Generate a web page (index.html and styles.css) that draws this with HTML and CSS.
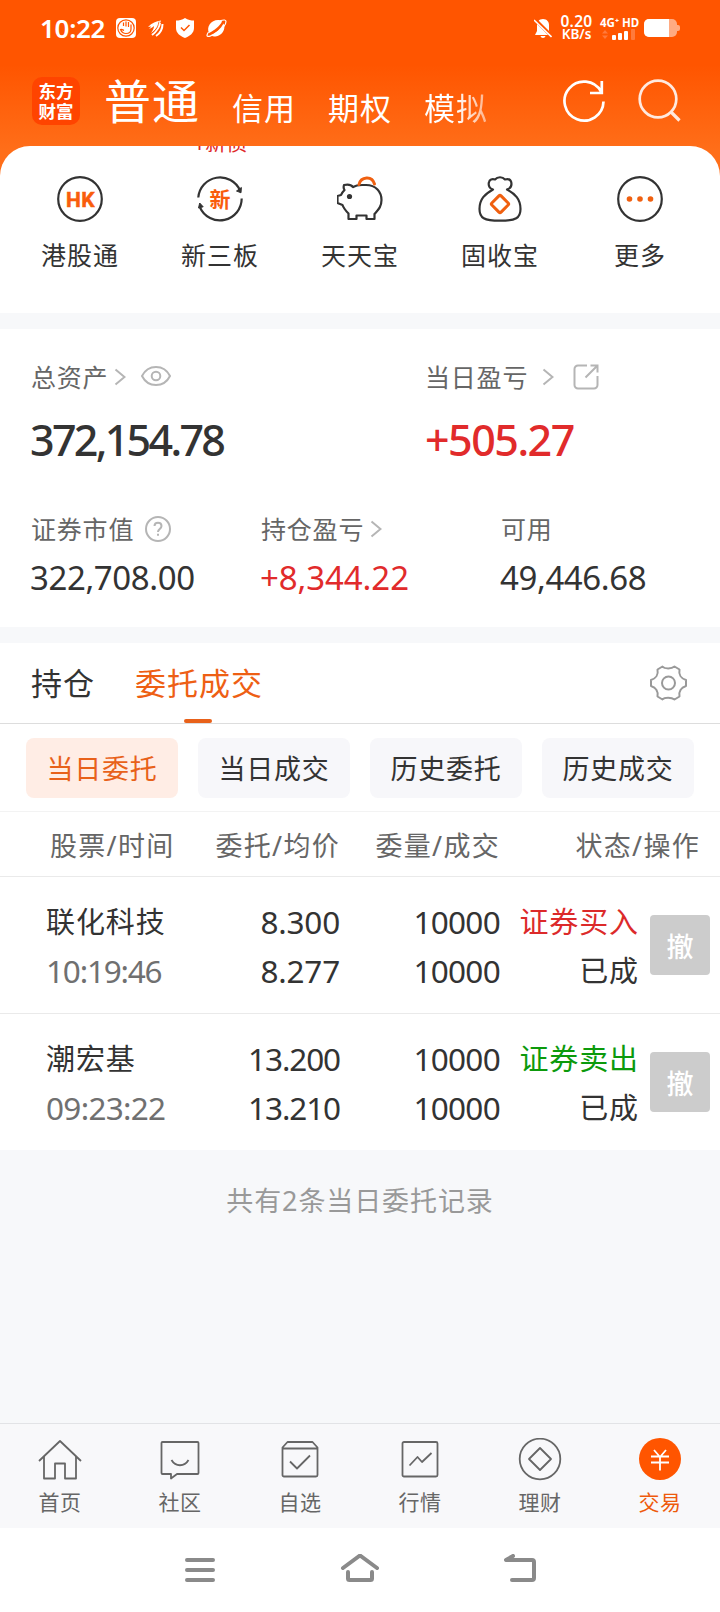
FILE: index.html
```html
<!DOCTYPE html>
<html lang="zh-CN">
<head>
    <meta charset="UTF-8">
    <meta name="viewport" content="width=device-width, initial-scale=1.0">
    <title>东方财富 - 交易</title>
    <link rel="stylesheet" href="styles.css">
</head>
<body>

    <div class="header">
        <!-- Status bar -->
        <div class="status-bar">
            <span class="clock">10:22</span>
            <svg class="status-icon" width="20" height="20" viewBox="0 0 20 20">
                <rect width="20" height="20" rx="4" fill="#fff"/>
                <circle cx="10" cy="10" r="8.2" fill="none" stroke="#ff5500" stroke-width="1.2"/>
                <path d="M7.500 4.500V8M10 3.500V8.500M12.500 4V9M15 6.500V11c0 3-2 4.500-5 4.500S5.500 14 4.500 11.500c1.500-.5 2.500.5 3.500 1" fill="none" stroke="#ff5500" stroke-width="1.200"/>
            </svg>
            <svg class="status-icon" width="16" height="17" viewBox="0 0 16 17">
                <path d="M0 7C4 3 8 1 13 0.500c-1 4-4 8.500-10 12.500 2-3 3-5 3-7-1 1-2.500 2-5 3 1-1 2-2 2-2.500z" fill="#fff"/>
                <path d="M8 16c4-2.500 6.500-6 6.500-12" fill="none" stroke="#fff" stroke-width="2"/>
                <path d="M4 15C9 11 11.500 7 12 3" fill="none" stroke="#fff" stroke-width="2"/>
                <path d="M4 13C8 10 10.500 6 11 1.500" fill="none" stroke="#ff5500" stroke-width="0.800"/>
            </svg>
            <svg class="status-icon" width="18" height="20" viewBox="0 0 18 20">
                <path d="M9 0c3 2 6 2.500 9 2.500V10c0 5-4 8-9 10C4 18 0 15 0 10V2.500C3 2.500 6 2 9 0z" fill="#fff"/>
                <path d="M5 9.500l3 3L13.500 7" fill="none" stroke="#ff5500" stroke-width="1.500"/>
            </svg>
            <svg class="status-icon" width="21" height="19" viewBox="0 0 21 19">
                <path d="M3 14C0 8 5 1 12 1c2 0 3 .5 4 1.500C14 7 8 11.500 3 14z" fill="#fff"/>
                <path d="M17.500 4.500c3 6-2 12.500-8 13-2 0-3.500-.5-4.500-1.500C10 14 15 9.500 17.500 4.500z" fill="#fff"/>
                <path d="M14 1.800c4-1.300 6-1 6 .7 0 3-4 7.500-9 11S1 18.500 1 16.500c0-1 .5-2 1.500-3.500" fill="none" stroke="#fff" stroke-width="1.200"/>
            </svg>
            <svg class="bell" width="18" height="21" viewBox="0 0 18 21">
                <path d="M9 1c4 0 6 3 6 6v6l2 4H1l2-4V7c0-3 2-6 6-6zM6.500 18h5c-.5 2.500-4.500 2.500-5 0z" fill="#fff"/>
                <path d="M1 1.500L18 18.500" stroke="#ff5500" stroke-width="3.500"/>
                <path d="M0 2L17.500 19" stroke="#fff" stroke-width="1.600"/>
            </svg>
            <div class="speed">
                <span>0.20</span>
                <span>KB/s</span>
            </div>
            <div class="signal">
                <span>4G⁺ HD</span>
                <svg width="34" height="11" viewBox="0 0 34 11">
                    <path d="M0 4.500L3 1l3 3.500zM0 6.500L3 10l3-3.500z" fill="#ff7a3c"/>
                    <rect x="10" y="6" width="4" height="5" rx="1" fill="#fff"/>
                    <rect x="16" y="4" width="4" height="7" rx="1" fill="#fff"/>
                    <rect x="22" y="2" width="4" height="9" rx="1" fill="#fff"/>
                    <rect x="29" y="0" width="4" height="11" rx="1" fill="#ff7a3c"/>
                </svg>
            </div>
            <div class="battery"><div class="battery-level"></div></div>
        </div>

        <!-- Account tabs -->
        <div class="account-bar">
            <div class="logo"><span>东方</span><span>财富</span></div>
            <span class="account active">普通</span>
            <span class="account">信用</span>
            <span class="account">期权</span>
            <span class="account fade">模拟</span>
            <svg class="refresh" width="44" height="44" viewBox="0 0 44 44">
                <path d="M41.500 22.500A19.500 19.500 0 1 1 39 12.500M39.800 2v12H28" fill="none" stroke="#fff" stroke-width="2.700"/>
            </svg>
            <svg class="search" width="44" height="44" viewBox="0 0 44 44">
                <circle cx="20" cy="20" r="18.300" fill="none" stroke="#ffe9df" stroke-width="2.700"/>
                <path d="M33 33l8.500 8.500" stroke="#ffe9df" stroke-width="3.200"/>
            </svg>
        </div>
    </div>

    <!-- Shortcuts -->
    <div class="shortcuts">
        <span class="bond-tip">1新债</span>
        <div class="shortcut">
            <svg width="46" height="46" viewBox="0 0 46 46">
                <circle cx="23" cy="23" r="21.800" fill="none" stroke="#333" stroke-width="2.200"/>
                <text x="23.500" y="30.500" text-anchor="middle" class="hk">HK</text>
            </svg>
            <span>港股通</span>
        </div>
        <div class="shortcut">
            <svg width="46" height="46" viewBox="0 0 46 46">
                <path d="M1.300 21.500A21.800 21.800 0 0 1 43 14.500M44.700 22.500A21.800 21.800 0 0 1 3 31.500" fill="none" stroke="#333" stroke-width="2.200"/>
                <path d="M39.500 15l4.500 1.800.4-5.300zM1.500 32l1.200-5 3.500 3.800z" fill="#333" stroke="#333" stroke-width="1" stroke-linejoin="round"/>
                <text x="23" y="31" text-anchor="middle" class="xin">新</text>
            </svg>
            <span>新三板</span>
        </div>
        <div class="shortcut">
            <svg width="46" height="46" viewBox="0 0 46 46">
                <path d="M7 9c4-1 7-.5 9 2 2.500-1.500 5-2 9-2h4c10 0 15.500 7 15.500 15 0 7-3.500 10-7 14v5h-8v-3.500h-10V43h-8v-5.500C9 35 6.500 32 5.500 29L.5 27v-7l3.500-1c1-2 2-3.500 3.500-5C6.500 12.500 6.500 10.500 7 9z" fill="none" stroke="#333" stroke-width="2.200" stroke-linejoin="round"/>
                <circle cx="12.500" cy="20.500" r="2.600" fill="#333"/>
                <path d="M22 8.500c2-8 13-9 15.500-.5" fill="none" stroke="#f06010" stroke-width="3" stroke-linecap="round"/>
            </svg>
            <span>天天宝</span>
        </div>
        <div class="shortcut">
            <svg width="46" height="46" viewBox="0 0 46 46">
                <path d="M16 13.500c-3.500-1-5-4-4-7.500.6-2.500 3-3.300 6-2.500 2.500-3 7.500-3 10 0 3-.8 5.500 0 6.200 2.500.8 3.500-.7 6.500-4.200 7.500 8 4.500 13.500 9.500 13.500 19.500 0 9-4.500 11.700-20.500 11.700S2.500 42 2.500 33c0-10 5.500-15 13.500-19.500z" fill="none" stroke="#333" stroke-width="2.200" stroke-linejoin="round"/>
                <rect x="16.500" y="21.500" width="13" height="13" rx="1.500" transform="rotate(45 23 28)" fill="none" stroke="#f06010" stroke-width="3"/>
            </svg>
            <span>固收宝</span>
        </div>
        <div class="shortcut">
            <svg width="46" height="46" viewBox="0 0 46 46">
                <circle cx="23" cy="23" r="21.800" fill="none" stroke="#333" stroke-width="2.200"/>
                <g fill="#f06010">
                    <circle cx="12.500" cy="23" r="2.800"/>
                    <circle cx="23" cy="23" r="2.800"/>
                    <circle cx="33.500" cy="23" r="2.800"/>
                </g>
            </svg>
            <span>更多</span>
        </div>
    </div>

    <!-- Assets -->
    <div class="assets">
        <div class="asset-row">
            <div class="asset total">
                <div class="asset-label">总资产
                    <svg class="arrow" width="12" height="18" viewBox="0 0 12 18"><path d="M1.500 1.500L10.500 9l-9 7.500"/></svg>
                    <svg class="eye" width="30" height="20" viewBox="0 0 30 20">
                        <path d="M1 10C7-2 23-2 29 10 23 22 7 22 1 10z"/>
                        <circle cx="15" cy="10" r="4.300"/>
                    </svg>
                </div>
                <div class="asset-value big">372,154.78</div>
            </div>
            <div class="asset today">
                <div class="asset-label">当日盈亏
                    <svg class="arrow far" width="12" height="18" viewBox="0 0 12 18"><path d="M1.500 1.500L10.500 9l-9 7.500"/></svg>
                    <svg class="share" width="26" height="26" viewBox="0 0 26 26">
                        <path d="M14 1.500H5A3.500 3.500 0 0 0 1.500 5v16A3.500 3.500 0 0 0 5 24.500h16a3.500 3.500 0 0 0 3.500-3.500v-9M12.500 13.500L24 2M17.500 1.500h7v7"/>
                    </svg>
                </div>
                <div class="asset-value big up gain">+505.27</div>
            </div>
        </div>
        <div class="asset-row second">
            <div class="asset market">
                <div class="asset-label">证券市值
                    <svg class="help" width="26" height="26" viewBox="0 0 26 26">
                        <circle cx="13" cy="13" r="12"/>
                        <path d="M9.500 10c0-4.500 7-4.500 7 0 0 3-3.500 3-3.500 6M13 17.800v2"/>
                    </svg>
                </div>
                <div class="asset-value">322,708.00</div>
            </div>
            <div class="asset position">
                <div class="asset-label">持仓盈亏
                    <svg class="arrow" width="12" height="18" viewBox="0 0 12 18"><path d="M1.500 1.500L10.500 9l-9 7.500"/></svg>
                </div>
                <div class="asset-value up">+8,344.22</div>
            </div>
            <div class="asset">
                <div class="asset-label">可用</div>
                <div class="asset-value">49,446.68</div>
            </div>
        </div>
    </div>

    <!-- Orders -->
    <div class="orders">
        <div class="tabs">
            <span class="tab">持仓</span>
            <span class="tab active">委托成交</span>
            <svg class="gear" width="37" height="36" viewBox="0 0 37 36">
                <path d="M12.500 1.500c2 2.500 9 2.500 12 0l5 3c-1 5 1.500 9 6.500 10.500v6c-5 1.500-7.500 5.500-6.500 10.500l-5 3c-3-2.500-10-2.500-12 0l-5-3c1-5-1.500-9-6.500-10.500v-6c5-1.500 7.500-5.500 6.500-10.500z"/>
                <circle cx="18.500" cy="18" r="6.500"/>
            </svg>
        </div>
        <div class="filters">
            <div class="filter active">当日委托</div>
            <div class="filter">当日成交</div>
            <div class="filter">历史委托</div>
            <div class="filter">历史成交</div>
        </div>
        <div class="table-head">
            <span class="col-name">股票/时间</span>
            <span class="col-price">委托/均价</span>
            <span class="col-amount">委量/成交</span>
            <span class="col-state">状态/操作</span>
        </div>
        <div class="order">
            <div class="col-name"><p>联化科技</p><p class="time">10:19:46</p></div>
            <div class="col-price"><p>8.300</p><p>8.277</p></div>
            <div class="col-amount"><p>10000</p><p>10000</p></div>
            <div class="col-state"><p class="buy">证券买入</p><p>已成</p></div>
            <div class="cancel">撤</div>
        </div>
        <div class="order">
            <div class="col-name"><p>潮宏基</p><p class="time late">09:23:22</p></div>
            <div class="col-price narrow"><p>13.200</p><p>13.210</p></div>
            <div class="col-amount"><p>10000</p><p>10000</p></div>
            <div class="col-state"><p class="sell">证券卖出</p><p>已成</p></div>
            <div class="cancel">撤</div>
        </div>
    </div>
    <div class="summary">共有2条当日委托记录</div>

    <!-- Bottom tab bar -->
    <div class="tab-bar">
        <div class="tab-item">
            <svg width="44" height="44" viewBox="0 0 44 44">
                <path d="M1 23L22 3l21 20M6 18.500V40.500h11V25.500h10v15h11V18.500"/>
            </svg>
            <span>首页</span>
        </div>
        <div class="tab-item">
            <svg width="44" height="44" viewBox="0 0 44 44">
                <path d="M4.500 4h35a1 1 0 0 1 1 1v30a1 1 0 0 1-1 1H19l-6 4.500V36H4.500a1 1 0 0 1-1-1V5a1 1 0 0 1 1-1zM13.500 22c4 7 13 7 17 0"/>
            </svg>
            <span>社区</span>
        </div>
        <div class="tab-item">
            <svg width="44" height="44" viewBox="0 0 44 44">
                <path d="M4.500 9.500L9.500 4h25l5 5.500V37a1.500 1.500 0 0 1-1.500 1.500H6A1.500 1.500 0 0 1 4.500 37zM4.500 10.500h35M12 23.500l7 7L32 17.500"/>
            </svg>
            <span>自选</span>
        </div>
        <div class="tab-item">
            <svg width="44" height="44" viewBox="0 0 44 44">
                <rect x="4.500" y="4" width="35" height="34.500" rx="1.500"/>
                <path d="M11.500 27.500l8-8.500 4.500 5 9.500-9"/>
            </svg>
            <span>行情</span>
        </div>
        <div class="tab-item">
            <svg width="44" height="44" viewBox="0 0 44 44">
                <circle cx="22" cy="21" r="20.300"/>
                <path d="M22 10l11 11-11 11-11-11z"/>
            </svg>
            <span>理财</span>
        </div>
        <div class="tab-item active">
            <svg width="44" height="44" viewBox="0 0 44 44">
                <circle class="coin" cx="22" cy="21" r="21"/>
                <path class="yen" d="M16 12l6 7 6-7M13 18.500h18M13 24.500h18M22 19v13.500"/>
            </svg>
            <span>交易</span>
        </div>
    </div>

    <!-- System navigation -->
    <div class="nav-bar">
        <svg width="40" height="32" viewBox="0 0 40 32">
            <path d="M7 6h26M7 16h26M7 26h26"/>
        </svg>
        <svg width="40" height="32" viewBox="0 0 40 32">
            <path d="M3 14L20 1.500 37 14M8 18v6.500a1.500 1.500 0 0 0 1.500 1.500h21a1.500 1.500 0 0 0 1.500-1.500V18"/>
        </svg>
        <svg width="40" height="32" viewBox="0 0 40 32">
            <path d="M13 2L6 6h26a2 2 0 0 1 2 2v16a2 2 0 0 1-2 2H12"/>
        </svg>
    </div>

</body>
</html>
```
FILE: styles.css
```css
body {
    margin: 0;
    width: 720px;
    height: 1612px;
    display: flex;
    flex-direction: column;
    font-family: "Noto Sans", "Noto Sans CJK SC", sans-serif;
    background-color: #f7f8fa;
    color: #333;
    overflow: hidden;
}

p {
    margin: 0;
}

svg {
    flex-shrink: 0;
}

/* Header */
.header {
    height: 176px;
    background: linear-gradient(#ff5500 65px, #ff6e19 150px);
    color: white;
}

.status-bar {
    display: flex;
    align-items: center;
    height: 56px;
    padding: 0 40px;
}

.clock {
    font-size: 26px;
    font-weight: 600;
    letter-spacing: -0.3px;
    width: 76px;
    line-height: 56px;
}

.status-icon {
    margin-right: 12px;
}

.bell {
    margin-left: auto;
    margin-right: 8px;
}

.speed {
    display: flex;
    flex-direction: column;
    align-items: center;
    width: 33px;
    font-size: 13.500px;
    font-weight: 600;
    line-height: 13px;
    margin-right: 7px;
    white-space: nowrap;
}

.speed span:first-child {
    font-size: 15.500px;
    letter-spacing: 0.3px;
}

.signal {
    width: 39px;
    font-size: 11.500px;
    font-weight: 700;
    line-height: 13px;
    margin-right: 5px;
    white-space: nowrap;
}

.signal svg {
    display: block;
    margin-left: 2px;
}

.battery {
    position: relative;
    width: 33px;
    height: 18px;
    border-radius: 5px;
    background-color: #ffab82;
    margin-right: 3px;
}

.battery::after {
    content: "";
    position: absolute;
    right: -3px;
    top: 6px;
    width: 3px;
    height: 6px;
    border-radius: 0 2px 2px 0;
    background-color: #ffab82;
}

.battery-level {
    width: 25px;
    height: 18px;
    border-radius: 5px 0 0 5px;
    background-color: white;
}

.account-bar {
    display: flex;
    align-items: flex-end;
    height: 74px;
    padding-left: 32px;
}

.logo {
    display: flex;
    flex-direction: column;
    justify-content: center;
    align-items: center;
    width: 48px;
    height: 48px;
    margin: 0 24px 5px 0;
    border-radius: 10px;
    background-color: #ff4400;
    font-size: 17.500px;
    font-weight: 700;
    line-height: 20px;
}

.account {
    font-size: 31px;
    letter-spacing: 1px;
    line-height: 40px;
    margin: 0 32px 2px 0;
}

.account.active {
    font-size: 47px;
    letter-spacing: 1px;
    line-height: 58px;
    margin: 0 32px 0 0;
}

.account.fade {
    margin-right: 0;
    background: linear-gradient(to right, #fff 50%, rgba(255, 255, 255, 0.5));
    -webkit-background-clip: text;
    background-clip: text;
    color: transparent;
}

.refresh {
    margin: 0 32px 7px auto;
}

.search {
    margin: 0 38px 7px 0;
}

/* Shortcuts */
.shortcuts {
    position: relative;
    display: flex;
    height: 137px;
    margin-top: -30px;
    padding: 30px 10px 0;
    border-radius: 30px 30px 0 0;
    background-color: white;
    overflow: hidden;
}

.shortcut {
    display: flex;
    flex-direction: column;
    align-items: center;
    width: 140px;
    font-size: 25px;
    letter-spacing: 1px;
    line-height: 36px;
}

.shortcut span {
    margin-top: 15px;
}

.bond-tip {
    position: absolute;
    left: 193px;
    top: -18px;
    font-size: 21px;
    line-height: 28px;
    color: #e02a2a;
}

.hk {
    font-family: Roboto, sans-serif;
    font-size: 21px;
    font-weight: 700;
    letter-spacing: 0.5px;
    fill: #f95d0c;
    stroke: #f95d0c;
    stroke-width: 0.5px;
}

.xin {
    font-size: 21px;
    font-weight: 700;
    letter-spacing: 0;
    fill: #f95d0c;
}

/* Assets */
.assets {
    height: 268px;
    margin-top: 16px;
    padding: 30px 0 0 30px;
    box-sizing: border-box;
    height: 298px;
    background-color: white;
}

.asset-row {
    display: flex;
}

.asset-row.second {
    margin-top: 39px;
}

.asset.total {
    width: 395px;
}

.asset.market {
    width: 230px;
}

.asset.position {
    width: 240px;
}

.asset-label {
    display: flex;
    align-items: center;
    height: 36px;
    padding-left: 1px;
    font-size: 25px;
    letter-spacing: 0.8px;
    line-height: 36px;
    color: #666;
}

.today .asset-label {
    padding-left: 0;
}

.asset-label svg {
    fill: none;
    stroke: #b5b5b5;
    stroke-width: 2;
}

.arrow {
    margin-left: 6px;
}

.arrow.far {
    margin-left: 14px;
}

.asset-label .eye {
    margin: -2px 0 0 15px;
}

.asset-label .share {
    margin-left: 19px;
}

.asset-label .help {
    margin-left: 11px;
}

.asset-value {
    height: 60px;
    font-size: 33px;
    letter-spacing: -0.400px;
    line-height: 62px;
}

.position .asset-value {
    letter-spacing: -0.1px;
}

.asset-value.big {
    height: 64px;
    padding-top: 13px;
    font-size: 43px;
    font-weight: 500;
    letter-spacing: -2.700px;
    line-height: 64px;
}

.asset-value.gain {
    letter-spacing: -1.500px;
}

.up {
    color: #e12b2b;
}

/* Orders */
.orders {
    margin-top: 16px;
    background-color: white;
}

.tabs {
    display: flex;
    height: 80px;
    padding: 0 33px 0 31px;
    border-bottom: 1px solid #ddd;
    font-size: 31px;
    letter-spacing: 1px;
    line-height: 81px;
}

.tab {
    position: relative;
    margin-right: 40px;
}

.tab.active {
    color: #ee5f14;
}

.tab.active::after {
    content: "";
    position: absolute;
    left: 49px;
    bottom: 0;
    width: 28px;
    height: 4px;
    border-radius: 2px;
    background-color: #e8611a;
}

.gear {
    margin: 22px 0 0 auto;
    fill: none;
    stroke: #999;
    stroke-width: 2;
    stroke-linejoin: round;
}

.filters {
    display: flex;
    gap: 20px;
    padding: 14px 26px 13px;
    border-bottom: 1px solid #f3f3f3;
}

.filter {
    width: 152px;
    height: 60px;
    border-radius: 8px;
    background-color: #f7f7fa;
    font-size: 27px;
    letter-spacing: 0.8px;
    line-height: 62px;
    text-align: center;
}

.filter.active {
    background-color: #ffede5;
    color: #e8611a;
}

.table-head,
.order {
    display: flex;
    border-bottom: 1px solid #eaeaea;
}

.table-head {
    height: 64px;
    font-size: 27px;
    letter-spacing: 1.3px;
    line-height: 67px;
    color: #666;
}

.col-name {
    width: 155px;
    padding-left: 46px;
}

.table-head .col-name {
    width: 151px;
    padding-left: 50px;
}

.col-price {
    width: 139px;
    text-align: right;
}

.col-amount {
    width: 160px;
    text-align: right;
}

.col-state {
    width: 139px;
    text-align: right;
}

.table-head .col-state {
    width: 200px;
}

.order {
    height: 116px;
    padding: 20px 0 0;
    font-size: 29px;
    line-height: 49px;
}

.order:last-child {
    border-bottom: none;
}

.order .col-name,
.order .col-state {
    letter-spacing: 0.9px;
}

.order .col-price,
.order .col-amount {
    font-size: 31.500px;
    letter-spacing: -0.200px;
}

.order .col-amount {
    letter-spacing: -0.700px;
}

.order .narrow {
    letter-spacing: -1.100px;
}

.order .time {
    font-size: 31.500px;
    letter-spacing: -1.200px;
    color: #707070;
}

.order .time.late {
    letter-spacing: -0.700px;
}

.buy {
    color: #dc2a2a;
}

.sell {
    color: #0c9a0c;
}

.cancel {
    width: 60px;
    height: 60px;
    margin: 18px 0 0 11px;
    border-radius: 4px;
    background-color: #ccc;
    color: white;
    font-size: 27px;
    font-weight: 500;
    line-height: 63px;
    text-align: center;
}

.summary {
    padding-top: 31px;
    font-size: 27px;
    letter-spacing: 0.9px;
    line-height: 40px;
    text-align: center;
    color: #999;
}

/* Bottom tab bar */
.tab-bar {
    display: flex;
    height: 104px;
    margin-top: auto;
    border-top: 1px solid #e2e3e6;
    background-color: #f8f8fa;
}

.tab-item {
    display: flex;
    flex-direction: column;
    align-items: center;
    width: 120px;
    padding-top: 14px;
    font-size: 21px;
    letter-spacing: 0.6px;
    line-height: 30px;
    color: #666;
}

.tab-item span {
    margin-top: 5px;
}

.tab-item svg {
    fill: none;
    stroke: #666;
    stroke-width: 1.800;
    stroke-linejoin: round;
}

.tab-item.active {
    color: #ee5a0c;
}

.tab-item .coin {
    fill: #ff5500;
    stroke: none;
}

.tab-item .yen {
    stroke: white;
    stroke-width: 1.800;
}

/* System navigation */
.nav-bar {
    display: flex;
    justify-content: center;
    gap: 120px;
    height: 58px;
    padding-top: 26px;
    background-color: white;
}

.nav-bar svg {
    fill: none;
    stroke: #8a8a8a;
    stroke-width: 4;
    stroke-linecap: round;
    stroke-linejoin: round;
}
```
